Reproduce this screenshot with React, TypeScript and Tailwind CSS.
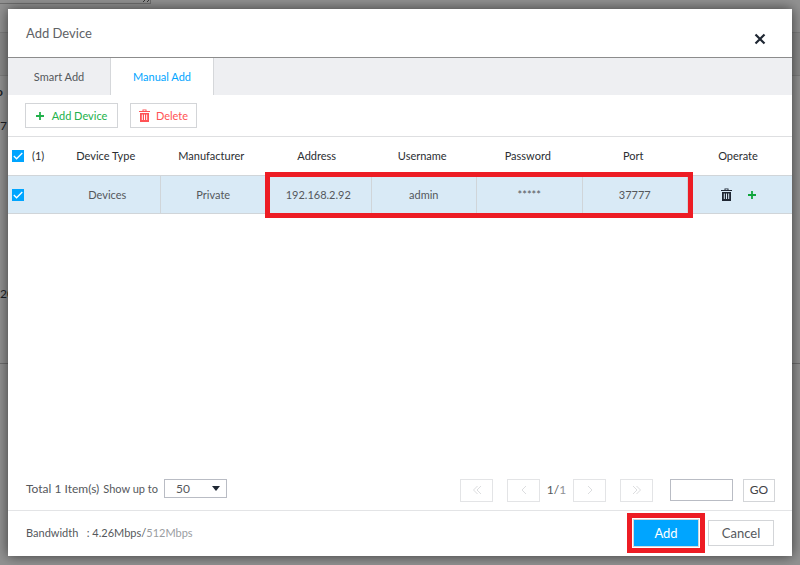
import { useState } from "react";

interface Device {
  type: string;
  manufacturer: string;
  address: string;
  username: string;
  password: string;
  port: string;
}

const devices: Device[] = [
  {
    type: "Devices",
    manufacturer: "Private",
    address: "192.168.2.92",
    username: "admin",
    password: "*****",
    port: "37777",
  },
];

const columns = ["Device Type", "Manufacturer", "Address", "Username", "Password", "Port"];

const TrashIcon = ({ className }: { className: string }) => (
  <svg viewBox="0 0 11 13" className={className} fill="currentColor" aria-hidden="true">
    <path fillRule="evenodd" d="M3.5 0.5h4V2H11v1H0V2h3.5zM4.5 1.3V2h2v-.7z" />
    <path
      fillRule="evenodd"
      d="M1 4h9v9H1zM2.8 5.5v5.5h1V5.5zM5 5.5v5.5h1V5.5zM7.2 5.5v5.5h1V5.5z"
    />
  </svg>
);

const PlusIcon = ({ className }: { className: string }) => (
  <svg viewBox="0 0 8 8" className={className} fill="currentColor" aria-hidden="true">
    <path d="M3.1 0h1.8v3.1H8v1.8H4.9V8H3.1V4.9H0V3.1h3.1z" />
  </svg>
);

const Chevron = ({ double, flip }: { double?: boolean; flip?: boolean }) => (
  <svg
    viewBox="0 0 10 10"
    className={`h-[10px] w-[10px] ${flip ? "rotate-180" : ""}`}
    fill="none"
    stroke="currentColor"
    aria-hidden="true"
  >
    {double ? <path d="M5.5 1l-4 4 4 4M9 1L5 5l4 4" /> : <path d="M7 1L3 5l4 4" />}
  </svg>
);

const Tick = ({
  label,
  checked,
  onChange,
}: {
  label: string;
  checked: boolean;
  onChange: () => void;
}) => (
  <label className="grid h-3 w-3 cursor-pointer">
    <input
      type="checkbox"
      aria-label={label}
      checked={checked}
      onChange={onChange}
      className="peer col-start-1 row-start-1 h-3 w-3 appearance-none border border-[#b8bcc0] bg-white checked:border-[#00a5ff] checked:bg-[#00a5ff]"
    />
    <svg
      viewBox="0 0 12 12"
      className="pointer-events-none col-start-1 row-start-1 hidden h-3 w-3 peer-checked:block"
      fill="none"
      stroke="#fff"
      strokeWidth="1.3"
    >
      <path d="M1.8 6l2.8 2.8L10.3 3" />
    </svg>
  </label>
);

const pagerButton =
  "flex h-[23px] w-[33px] items-center justify-center border border-[#e3e4e6] text-[#dcdddf]";

const PageBehind = () => (
  <div className="flex min-h-screen flex-col bg-[#929292] text-xs text-[#1c1f26]">
    <div className="h-8 overflow-hidden">
      <div className="flex h-1 w-[151px] items-end justify-end border-r border-b border-[#6e6e6e]">
        <svg viewBox="0 0 8 4" className="h-1 w-2" stroke="#333" fill="none">
          <path d="M1 3l3-3M5 3l3-3" />
        </svg>
      </div>
    </div>
    <div className="h-11 border-y border-[#7e7e7e] bg-[#8a8a8a]"></div>
    <div className="flex h-72 flex-col items-start border-b border-[#6e6e6e]">
      <span className="-ml-1 pt-2 leading-4 font-bold">o</span>
      <span className="pt-[18px] leading-4">7</span>
      <span className="pt-[152px] leading-4">20</span>
    </div>
  </div>
);

export default function App() {
  const [tab, setTab] = useState("manual");
  const [selected, setSelected] = useState(true);
  const [page, setPage] = useState("");

  const toggle = () => setSelected(!selected);

  return (
    <div className="relative min-h-screen overflow-hidden font-['Lato',sans-serif]">
      <PageBehind />

      <div
        role="dialog"
        aria-label="Add Device"
        className="absolute inset-x-2 top-[9px] bottom-[9px] flex flex-col bg-white text-[11px] leading-4 text-[#55585c] shadow-[0_0_12px_rgba(0,0,0,0.6)]"
      >
        <header className="flex h-[49px] items-center justify-between border-b border-[#8c8c8c] pr-[26px] pl-[18px]">
          <h2 className="text-[13px] text-[#606266]">Add Device</h2>
          <button type="button" aria-label="Close" className="mt-3 text-[#1f2733]">
            <svg viewBox="0 0 12 12" className="h-3 w-3" stroke="currentColor" strokeWidth="2.2">
              <path d="M1.5 1.5l9 9M10.5 1.5l-9 9" />
            </svg>
          </button>
        </header>

        <div role="tablist" className="flex h-[37px] bg-[#eeeff2]">
          <button
            type="button"
            role="tab"
            aria-selected={tab === "smart"}
            onClick={() => setTab("smart")}
            className={`w-[102px] ${tab === "smart" ? "bg-white text-[#00a5ff]" : ""}`}
          >
            Smart Add
          </button>
          <button
            type="button"
            role="tab"
            aria-selected={tab === "manual"}
            onClick={() => setTab("manual")}
            className={`w-[104px] border-x border-[#d5d7da] ${tab === "manual" ? "bg-white text-[#00a5ff]" : ""}`}
          >
            Manual Add
          </button>
        </div>

        <div className="flex h-[42px] items-center gap-3 border-b border-[#dedfe1] px-[17px]">
          <button
            type="button"
            className="flex h-[25px] w-[93px] items-center justify-center gap-2 border border-[#d3d5d8] text-[#22b14c]"
          >
            <PlusIcon className="h-2 w-2" />
            Add Device
          </button>
          <button
            type="button"
            className="flex h-[25px] w-[67px] items-center justify-center gap-[6px] border border-[#d3d5d8] text-[#ff5355]"
          >
            <TrashIcon className="h-[13px] w-[11px]" />
            Delete
          </button>
        </div>

        <div className="flex-1">
          <table className="w-full table-fixed border-separate border-spacing-0 text-center">
            <thead>
              <tr className="h-[38px] text-[#2b2e32]">
                <th className="w-[47px] px-1 font-normal">
                  <div className="flex items-center gap-2">
                    <Tick label="Select all" checked={selected} onChange={toggle} />
                    (1)
                  </div>
                </th>
                {columns.map((c) => (
                  <th key={c} className="pr-1 font-normal">
                    {c}
                  </th>
                ))}
                <th className="w-[104px] pr-1 font-normal">Operate</th>
              </tr>
            </thead>
            <tbody>
              {devices.map((d) => (
                <tr
                  key={d.address}
                  className="h-[39px] bg-[#d9eaf6] *:border-y *:border-[#d0d5d9]"
                >
                  <td className="px-1">
                    <Tick label={"Select " + d.address} checked={selected} onChange={toggle} />
                  </td>
                  <td className="border-r">{d.type}</td>
                  <td>{d.manufacturer}</td>
                  <td className="relative border-r">
                    {d.address}
                    {/* marks the fields to fill in, address to port */}
                    <span className="pointer-events-none absolute -top-1 -bottom-[5px] -left-px z-10 w-[calc(400%+10px)] border-5 border-[#ed1c24]"></span>
                  </td>
                  <td className="border-r">{d.username}</td>
                  <td className="border-r">{d.password}</td>
                  <td className="border-r">{d.port}</td>
                  <td className="pr-1">
                    <div className="flex items-center justify-center gap-4">
                      <button type="button" aria-label="Delete device" className="text-[#1f2733]">
                        <TrashIcon className="h-[13px] w-[11px]" />
                      </button>
                      <button type="button" aria-label="Add device" className="text-[#0fa53c]">
                        <PlusIcon className="h-2 w-2" />
                      </button>
                    </div>
                  </td>
                </tr>
              ))}
            </tbody>
          </table>
        </div>

        <div className="flex h-11 items-center justify-between border-b border-[#e3e4e6] pr-[17px] pl-[18px]">
          <div className="flex items-center">
            <span className="text-xs">Total 1 Item(s)</span>
            <label htmlFor="page-size" className="pr-[6px] pl-1">
              Show up to
            </label>
            <span className="relative flex items-center">
              <select
                id="page-size"
                defaultValue="50"
                className="h-[19px] w-[63px] appearance-none border border-[#b9bcc4] bg-white pl-[11px] text-xs leading-4"
              >
                <option>20</option>
                <option>50</option>
                <option>100</option>
              </select>
              <svg
                viewBox="0 0 8 5"
                className="pointer-events-none absolute right-[7px] h-[5px] w-2"
                fill="#1f2733"
              >
                <path d="M0 0h8L4 5z" />
              </svg>
            </span>
          </div>

          <div className="flex items-center pt-[3px]">
            <button type="button" aria-label="First page" className={pagerButton}>
              <Chevron double />
            </button>
            <button type="button" aria-label="Previous page" className={`ml-[14px] ${pagerButton}`}>
              <Chevron />
            </button>
            <span className="w-[33px] text-center text-xs">
              1/<span className="text-[#8e9195]">1</span>
            </span>
            <button type="button" aria-label="Next page" className={pagerButton}>
              <Chevron flip />
            </button>
            <button type="button" aria-label="Last page" className={`ml-[14px] ${pagerButton}`}>
              <Chevron double flip />
            </button>
            <input
              aria-label="Page number"
              value={page}
              onChange={(e) => setPage(e.target.value)}
              className="ml-[17px] h-[22px] w-[63px] border border-[#b9bcc4] px-1"
            />
            <button
              type="button"
              className="ml-[10px] h-[23px] w-8 border border-[#d3d5d8] text-xs text-[#3f4246]"
            >
              GO
            </button>
          </div>
        </div>

        <footer className="flex h-[45px] items-center justify-between px-[18px] pb-[2px]">
          <p>
            Bandwidth &nbsp; : 4.26Mbps/<span className="text-[#9a9da1]">512Mbps</span>
          </p>
          <div className="flex items-center gap-[3px] text-[13px]">
            <div className="border-5 border-[#ed1c24] p-px">
              <button
                type="button"
                className="block h-7 w-[66px] border border-[#cfd6dc] bg-[#00a5ff] text-white"
              >
                Add
              </button>
            </div>
            <button type="button" className="h-[26px] w-[66px] border border-[#d3d5d8]">
              Cancel
            </button>
          </div>
        </footer>
      </div>
    </div>
  );
}
